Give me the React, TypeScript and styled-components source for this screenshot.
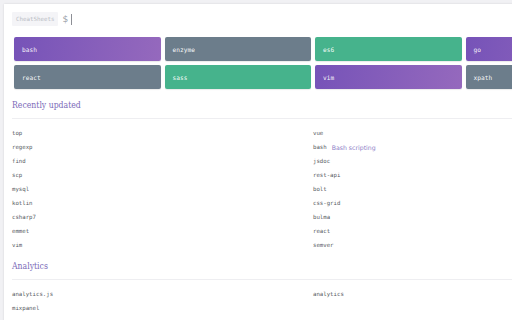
import React from "react";
import styled, { createGlobalStyle } from "styled-components";

const Global = createGlobalStyle`
  html, body { margin: 0; padding: 0; background: #f1f1f4; overflow: hidden; }
  body { width: 512px; height: 320px; }
`;

const Card = styled.div`
  margin: 4px 0 0 4px;
  width: 530px;
  height: 330px;
  background: #fff;
  box-shadow: 0 0 2px rgba(0, 0, 0, 0.12);
  padding: 8px 0 0 8px;
  box-sizing: border-box;
`;

const SearchRow = styled.div`
  display: flex;
  align-items: center;
  height: 14px;
  gap: 4px;
`;

const Brand = styled.span`
  background: #f4f4f7;
  color: #b9bcc4;
  font-family: "DejaVu Sans Mono", monospace;
  font-size: 5.8px;
  line-height: 14px;
  padding: 0 4px;
  border-radius: 1px;
`;

const Dollar = styled.span`
  color: #9a9ea8;
  font-family: "DejaVu Sans", sans-serif;
  font-size: 9px;
  line-height: 14px;
`;

const Caret = styled.span`
  width: 1px;
  height: 11px;
  background: #8d8f96;
  margin-left: -1px;
`;

const Tiles = styled.div`
  display: grid;
  grid-template-columns: repeat(4, 146.5px);
  grid-auto-rows: 24px;
  gap: 4px;
  margin: 11px 0 0 2px;
`;

const tileBg: Record<string, string> = {
  purple: "linear-gradient(100deg, #7653b8 0%, #9569bd 100%)",
  gray: "#6c7d8b",
  green: "#46b38c",
};

const Tile = styled.div<{ $c: string }>`
  background: ${(p) => tileBg[p.$c]};
  border-radius: 2px;
  color: rgba(255, 255, 255, 0.95);
  font-family: "DejaVu Sans Mono", monospace;
  font-size: 6.2px;
  display: flex;
  align-items: center;
  padding-left: 8px;
  box-shadow: 0 1px 1px rgba(0, 0, 0, 0.08);
`;

const Heading = styled.h2<{ $first?: boolean }>`
  margin: ${(p) => (p.$first ? "10px" : "8px")} 0 0 0;
  font-family: "DejaVu Serif Condensed", "DejaVu Serif", serif;
  font-stretch: condensed;
  font-weight: normal;
  font-size: 8.6px;
  line-height: 12px;
  color: #7b6ab8;
`;

const Divider = styled.div`
  height: 1px;
  background: #eeeef1;
  margin: 7px 0 0 0;
`;

const List = styled.div`
  display: grid;
  grid-template-columns: 301px 1fr;
  grid-auto-rows: 14px;
  margin-top: 7px;
`;

const Item = styled.div`
  display: flex;
  align-items: center;
  gap: 5px;
  font-family: "DejaVu Sans Mono", monospace;
  font-size: 5.7px;
  color: #555961;
`;

const Sub = styled.span`
  font-family: "DejaVu Sans", sans-serif;
  font-size: 6.2px;
  color: #8d80c8;
`;

const tiles: [string, string][] = [
  ["bash", "purple"],
  ["enzyme", "gray"],
  ["es6", "green"],
  ["go", "purple"],
  ["react", "gray"],
  ["sass", "green"],
  ["vim", "purple"],
  ["xpath", "gray"],
];

const recent: [string, string?][] = [
  ["top"], ["vue"],
  ["regexp"], ["bash", "Bash scripting"],
  ["find"], ["jsdoc"],
  ["scp"], ["rest-api"],
  ["mysql"], ["bolt"],
  ["kotlin"], ["css-grid"],
  ["csharp7"], ["bulma"],
  ["emmet"], ["react"],
  ["vim"], ["semver"],
];

const analytics: [string, string?][] = [["analytics.js"], ["analytics"], ["mixpanel"]];

const Section = ({ title, items, first }: { title: string; items: [string, string?][]; first?: boolean }) => (
  <>
    <Heading $first={first}>{title}</Heading>
    <Divider />
    <List>
      {items.map(([n, s], i) => (
        <Item key={i}>
          {n}
          {s && <Sub>{s}</Sub>}
        </Item>
      ))}
    </List>
  </>
);

export default function App() {
  return (
    <>
      <Global />
      <Card>
        <SearchRow>
          <Brand>CheatSheets</Brand>
          <Dollar>$</Dollar>
          <Caret />
        </SearchRow>
        <Tiles>
          {tiles.map(([n, c]) => (
            <Tile key={n} $c={c}>{n}</Tile>
          ))}
        </Tiles>
        <Section title="Recently updated" items={recent} first />
        <Section title="Analytics" items={analytics} />
      </Card>
    </>
  );
}
